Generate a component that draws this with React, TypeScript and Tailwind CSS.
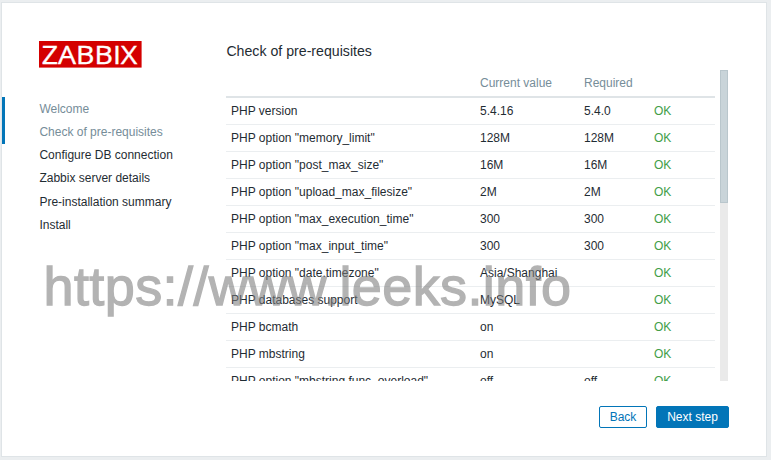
const steps = [
  { label: "Welcome", done: true },
  { label: "Check of pre-requisites", done: true },
  { label: "Configure DB connection", done: false },
  { label: "Zabbix server details", done: false },
  { label: "Pre-installation summary", done: false },
  { label: "Install", done: false },
];

const checks: [string, string, string][] = [
  ["PHP version", "5.4.16", "5.4.0"],
  ['PHP option "memory_limit"', "128M", "128M"],
  ['PHP option "post_max_size"', "16M", "16M"],
  ['PHP option "upload_max_filesize"', "2M", "2M"],
  ['PHP option "max_execution_time"', "300", "300"],
  ['PHP option "max_input_time"', "300", "300"],
  ['PHP option "date.timezone"', "Asia/Shanghai", ""],
  ["PHP databases support", "MySQL", ""],
  ["PHP bcmath", "on", ""],
  ["PHP mbstring", "on", ""],
  ['PHP option "mbstring.func_overload"', "off", "off"],
];

function Logo() {
  return (
    <svg width="103" height="27" viewBox="0 0 103 27" className="ml-[37px] mt-[38px] block overflow-visible">
      <rect width="102.6" height="26.6" fill="#d40000" />
      <text
        x="2.8"
        y="22.6"
        textLength="95.5"
        lengthAdjust="spacingAndGlyphs"
        fill="#fff"
        stroke="#fff"
        strokeWidth="0.4"
        fontSize="26"
        className="font-['Open_Sans',sans-serif]"
      >
        ZABBIX
      </text>
    </svg>
  );
}

function Sidebar() {
  return (
    <aside className="w-[224px] shrink-0">
      <Logo />
      <ul className="mt-[29px]">
        {steps.map((s) => (
          <li
            key={s.label}
            className={
              "flex h-[23.27px] items-center border-l-[3px] pl-[34.4px] leading-[14px] " +
              (s.done ? "border-[#0275b8] text-[#768d99]" : "border-transparent")
            }
          >
            {s.label}
          </li>
        ))}
      </ul>
    </aside>
  );
}

function CheckTable() {
  return (
    <div className="flex h-[311px] w-[502px] justify-between overflow-hidden">
      <div className="w-[489px]">
        <div className="grid h-[28px] grid-cols-[249px_104px_70px_1fr] items-center border-b-2 border-[#dfe4e7] pl-[5px] text-[#768d99]">
          <span />
          <span>Current value</span>
          <span>Required</span>
          <span />
        </div>
        {checks.map(([name, current, required]) => (
          <div
            key={name}
            className="grid h-[27px] grid-cols-[249px_104px_70px_1fr] items-center border-b border-[#ebeef0] pl-[5px]"
          >
            <span>{name}</span>
            <span>{current}</span>
            <span>{required}</span>
            <span className="text-[#429e47]">OK</span>
          </div>
        ))}
      </div>
      <div className="h-full w-2 bg-[#eaeaea]">
        <div className="h-[133px] border border-[#b9c6cc] bg-[#c9d4d9]" />
      </div>
    </div>
  );
}

export default function App() {
  return (
    <div className="relative h-[460px] w-[771px] overflow-hidden bg-[#ebeef0] pl-px pt-0.5 font-['Liberation_Sans',Arial,sans-serif] text-[12px] leading-[14px] text-[#1f2c33]">
      <div className="flex h-[455px] w-[766px] border border-[#dfe4e7] bg-white">
        <Sidebar />
        <main className="w-[503px] pt-[40px]">
          <h1 className="h-[27px] pl-[0.4px] text-[14.16px] leading-[16px]">Check of pre-requisites</h1>
          <CheckTable />
          <div className="mt-[25px] flex justify-end gap-[9px]">
            <button className="h-[22px] w-[48px] rounded-[2px] border border-[#0275b8] text-[#0275b8]">
              Back
            </button>
            <button className="h-[22px] w-[73px] rounded-[2px] border border-[#0275b8] bg-[#0275b8] text-white">
              Next step
            </button>
          </div>
        </main>
      </div>
      <div className="pointer-events-none absolute left-[43.5px] top-[254px] whitespace-nowrap text-[54px] leading-[64px] tracking-[0.4px] text-[#7d7d7d] opacity-58 [-webkit-text-stroke:1.3px_#7d7d7d]">
        https://www.leeks.info
      </div>
    </div>
  );
}
